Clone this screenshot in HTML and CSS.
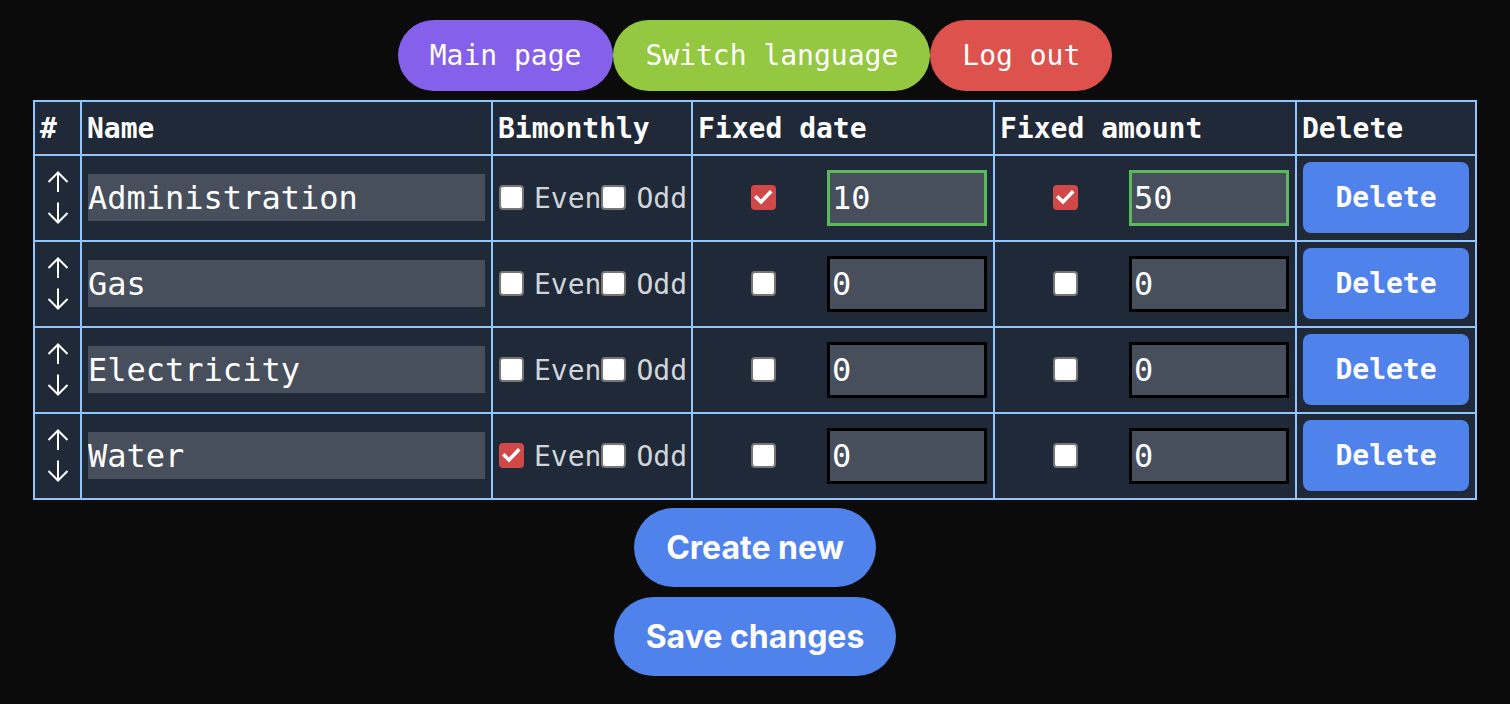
FILE: index.html
```html
<!DOCTYPE html>
<html lang="en">
<head>
<meta charset="utf-8">
<title>Expenses</title>
<link rel="stylesheet" href="styles.css">
</head>
<body>
<main class="page">
  <nav class="nav">
    <button class="pill pill-purple">Main page</button>
    <button class="pill pill-green">Switch language</button>
    <button class="pill pill-red">Log out</button>
  </nav>

  <table class="grid">
    <colgroup>
      <col class="c-num"><col class="c-name"><col class="c-bi"><col class="c-fix"><col class="c-fix"><col class="c-del">
    </colgroup>
    <thead>
      <tr><th>#</th><th>Name</th><th>Bimonthly</th><th>Fixed date</th><th>Fixed amount</th><th>Delete</th></tr>
    </thead>
    <tbody>
      <tr>
        <td class="move"><div class="arrows">
          <svg class="arrow" viewBox="0 0 22 22"><path d="M11 1.5V21M1.5 11L11 1.5L20.5 11"/></svg>
          <svg class="arrow" viewBox="0 0 22 22"><path d="M11 0.5V20M1.5 11L11 20.5L20.5 11"/></svg>
        </div></td>
        <td><input class="name" type="text" value="Administration"></td>
        <td><div class="bi"><input class="cb" type="checkbox"><span class="lbl">Even</span><input class="cb" type="checkbox"><span class="lbl">Odd</span></div></td>
        <td><div class="fix"><div class="cbwrap"><input class="cb" type="checkbox" checked></div><input class="num on" type="text" value="10"></div></td>
        <td><div class="fix"><div class="cbwrap"><input class="cb" type="checkbox" checked></div><input class="num on" type="text" value="50"></div></td>
        <td><button class="del">Delete</button></td>
      </tr>
      <tr>
        <td class="move"><div class="arrows">
          <svg class="arrow" viewBox="0 0 22 22"><path d="M11 1.5V21M1.5 11L11 1.5L20.5 11"/></svg>
          <svg class="arrow" viewBox="0 0 22 22"><path d="M11 0.5V20M1.5 11L11 20.5L20.5 11"/></svg>
        </div></td>
        <td><input class="name" type="text" value="Gas"></td>
        <td><div class="bi"><input class="cb" type="checkbox"><span class="lbl">Even</span><input class="cb" type="checkbox"><span class="lbl">Odd</span></div></td>
        <td><div class="fix"><div class="cbwrap"><input class="cb" type="checkbox"></div><input class="num" type="text" value="0"></div></td>
        <td><div class="fix"><div class="cbwrap"><input class="cb" type="checkbox"></div><input class="num" type="text" value="0"></div></td>
        <td><button class="del">Delete</button></td>
      </tr>
      <tr>
        <td class="move"><div class="arrows">
          <svg class="arrow" viewBox="0 0 22 22"><path d="M11 1.5V21M1.5 11L11 1.5L20.5 11"/></svg>
          <svg class="arrow" viewBox="0 0 22 22"><path d="M11 0.5V20M1.5 11L11 20.5L20.5 11"/></svg>
        </div></td>
        <td><input class="name" type="text" value="Electricity"></td>
        <td><div class="bi"><input class="cb" type="checkbox"><span class="lbl">Even</span><input class="cb" type="checkbox"><span class="lbl">Odd</span></div></td>
        <td><div class="fix"><div class="cbwrap"><input class="cb" type="checkbox"></div><input class="num" type="text" value="0"></div></td>
        <td><div class="fix"><div class="cbwrap"><input class="cb" type="checkbox"></div><input class="num" type="text" value="0"></div></td>
        <td><button class="del">Delete</button></td>
      </tr>
      <tr>
        <td class="move"><div class="arrows">
          <svg class="arrow" viewBox="0 0 22 22"><path d="M11 1.5V21M1.5 11L11 1.5L20.5 11"/></svg>
          <svg class="arrow" viewBox="0 0 22 22"><path d="M11 0.5V20M1.5 11L11 20.5L20.5 11"/></svg>
        </div></td>
        <td><input class="name" type="text" value="Water"></td>
        <td><div class="bi"><input class="cb" type="checkbox" checked><span class="lbl">Even</span><input class="cb" type="checkbox"><span class="lbl">Odd</span></div></td>
        <td><div class="fix"><div class="cbwrap"><input class="cb" type="checkbox"></div><input class="num" type="text" value="0"></div></td>
        <td><div class="fix"><div class="cbwrap"><input class="cb" type="checkbox"></div><input class="num" type="text" value="0"></div></td>
        <td><button class="del">Delete</button></td>
      </tr>
    </tbody>
  </table>

  <button class="big big-first">Create new</button>
  <button class="big">Save changes</button>
</main>
</body>
</html>
```

FILE: styles.css
```css
html, body {
  margin: 0;
  padding: 0;
  background: #0b0b0b;
}

.page {
  display: flex;
  flex-direction: column;
  align-items: center;
  padding-top: 20px;
  font-family: "DejaVu Sans Mono", monospace;
  color: #ffffff;
}

.nav {
  display: flex;
}

.pill {
  font-family: "DejaVu Sans Mono", monospace;
  font-size: 28px;
  line-height: 33px;
  height: 71px;
  color: #ffffff;
  border: none;
  border-radius: 9999px;
  padding: 0 32px;
  margin: 0;
  cursor: pointer;
}
.pill-purple { background: #8560ea; }
.pill-green { background: #94c840; }
.pill-red { background: #dd524c; }

.grid {
  margin-top: 9px;
  border-collapse: collapse;
  table-layout: fixed;
  width: 1442px;
  background: #1f2937;
}

.c-num { width: 47px; }
.c-name { width: 411px; }
.c-bi { width: 200px; }
.c-fix { width: 302px; }
.c-del { width: 180px; }

.grid th,
.grid td {
  border: 2px solid #93c5fd;
  text-align: left;
  vertical-align: middle;
}

.grid th {
  font-size: 28px;
  line-height: 33px;
  font-weight: 700;
  padding: 10px 5px 9px;
  white-space: nowrap;
}

.grid td {
  padding: 6px 6px 7px 6px;
}

.move {
  text-align: center;
}

.arrows {
  display: flex;
  flex-direction: column;
  align-items: center;
  gap: 9px;
}

.arrow {
  width: 22px;
  height: 22px;
  fill: none;
  stroke: #ffffff;
  stroke-width: 2;
}

.name {
  display: block;
  box-sizing: border-box;
  width: 100%;
  height: 47px;
  margin: 0;
  padding: 0;
  border: none;
  background: #484f5c;
  color: #ffffff;
  font-family: "DejaVu Sans Mono", monospace;
  font-size: 32px;
  outline: none;
}

.bi {
  display: flex;
  align-items: center;
}

.lbl {
  font-size: 28px;
  line-height: 33px;
  color: #d1d5db;
  margin-left: 10px;
  padding-top: 1px;
}

.cb {
  appearance: none;
  -webkit-appearance: none;
  box-sizing: border-box;
  width: 25px;
  height: 25px;
  margin: 0;
  border: 2px solid #767676;
  border-radius: 4px;
  background: #ffffff;
  flex: none;
}

.cb:checked {
  border-color: #d14848;
  background: #d14848 url("data:image/svg+xml,%3Csvg xmlns='http://www.w3.org/2000/svg' viewBox='0 0 25 25'%3E%3Cpath d='M5.5 12.5L10 17L19 7.5' fill='none' stroke='white' stroke-width='3.6' stroke-linecap='square'/%3E%3C/svg%3E") center / 25px 25px no-repeat;
}

.fix {
  display: flex;
  align-items: center;
}

.cbwrap {
  flex: 1;
  display: flex;
  justify-content: center;
}

.num {
  box-sizing: border-box;
  width: 160px;
  height: 56px;
  margin: 0;
  padding: 0 0 0 2px;
  border: 3px solid #000000;
  background: #484f5c;
  color: #ffffff;
  font-family: "DejaVu Sans Mono", monospace;
  font-size: 32px;
  outline: none;
}

.num.on {
  border-color: #5cb85c;
}

.del {
  display: block;
  width: 100%;
  height: 71px;
  margin: 0;
  border: none;
  border-radius: 8px;
  background: #4f82eb;
  color: #ffffff;
  font-family: "DejaVu Sans Mono", monospace;
  font-size: 28px;
  font-weight: 700;
  cursor: pointer;
}

.big {
  margin: 10px 0 0;
  height: 79px;
  padding: 0 32px;
  border: none;
  border-radius: 9999px;
  background: #4f82eb;
  color: #ffffff;
  font-family: Inter, "Liberation Sans", sans-serif;
  font-size: 32px;
  font-weight: 700;
  cursor: pointer;
}

.big-first {
  margin-top: 8px;
}
```
